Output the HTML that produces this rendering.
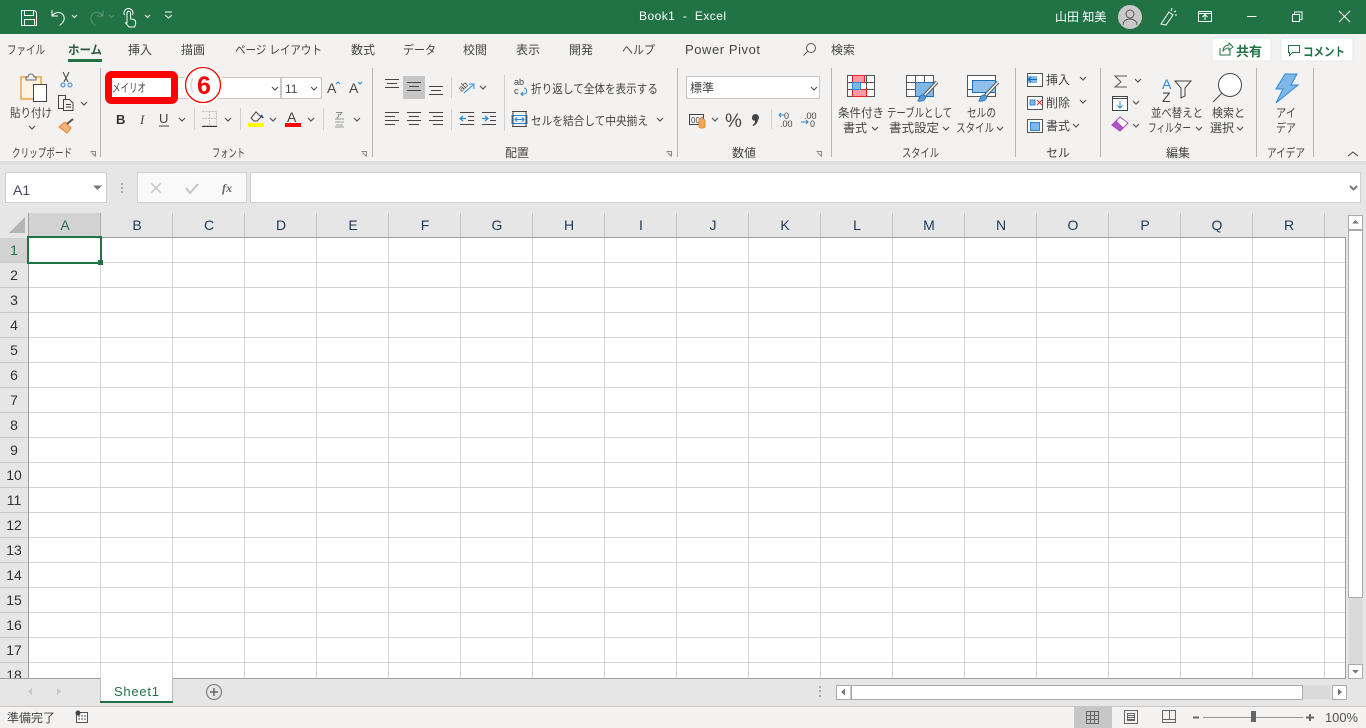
<!DOCTYPE html>
<html lang="ja"><head><meta charset="utf-8"><title>Book1 - Excel</title>
<style>
html,body{margin:0;padding:0;width:1366px;height:728px;overflow:hidden;background:#e6e6e6}
svg{display:block}
text{font-family:"Liberation Sans","Noto Sans CJK JP",sans-serif;font-size:12px;fill:#444;white-space:pre}
.t{font-size:12px;fill:#444}
.h{font-size:14px;fill:#1d3a5c;text-anchor:middle}
.r{font-size:14px;fill:#333;text-anchor:middle}
.c{text-anchor:middle}
.ch{fill:none;stroke:#555;stroke-width:1.2}
.g{stroke:#d4d4d4;stroke-width:1}
.sep{stroke:#b5b5b5;stroke-width:1}
</style></head><body>
<svg width="1366" height="728" viewBox="0 0 1366 728" xmlns="http://www.w3.org/2000/svg">
<!-- title bar -->
<rect width="1366" height="34" fill="#217346"/>
<g fill="none" stroke="#fff" stroke-width="1">
<path d="M21.5 10.500h13l2 2v13h-15zM24.500 10.500v5h9v-5M24.500 25.500v-6h10v6"/>
<path d="M52 10v6h6M52.500 15.500c3-4 9-4 11 0s0 7-4 10"/>
<path d="M72 15l2.500 2.500 2.500-2.500M145 15l2.500 2.500 2.500-2.500"/>
<path d="M127 23v-10a1.800 1.800 0 0 1 3.600 0v6c3 0 5 1 5 3v2l-1 3h-5.600l-3.500-4zM124.500 15a4.500 4.500 0 1 1 8 0"/>
<path d="M165 12h7M165 15l3.500 3 3.500-3"/>
</g>
<g fill="none" stroke="#5a9476" stroke-width="1"><path d="M103 10v6h-6M102.500 15.500c-3-4-9-4-11 0s0 7 4 10"/><path d="M109 15l2.500 2.500 2.500-2.500"/></g>
<text x="639" y="20" style="fill:#fff;font-size:12px" textLength="87" lengthAdjust="spacing">Book1  -  Excel</text>
<text x="1055" y="21" style="fill:#fff;font-size:12px">山田 知美</text>
<circle cx="1130" cy="17" r="12" fill="#c9c9c9"/>
<circle cx="1130" cy="14" r="4" fill="none" stroke="#555"/><path d="M1123 25c0-8 14-8 14 0" fill="none" stroke="#555"/>
<g fill="none" stroke="#fff" stroke-width="1">
<path d="M1161 24l8-12 4 3-7 10zM1161 24l5 1M1171 11l1-3M1174 12l2-1M1175 15l2 0"/>
<path d="M1198.500 11.500h13v10h-13zM1198.500 13.500h13M1205 20v-5M1202.500 17l2.500-2.500 2.500 2.500"/>
<path d="M1247 16.500h9.500M1292.500 14.500h7v7h-7zM1294.500 14.500v-2.500h7.500v7.500h-2"/>
<path d="M1339 11l11 11M1350 11l-11 11"/>
</g>
<!-- ribbon -->
<rect y="34" width="1366" height="127" fill="#f3f2f1"/>
<rect y="161" width="1366" height="4" fill="#dedede"/>
<g class="t">
<text x="7" y="54" textLength="38" lengthAdjust="spacingAndGlyphs">ファイル</text>
<text x="68" y="54" style="font-weight:bold;fill:#2b5a41" textLength="34" lengthAdjust="spacingAndGlyphs">ホーム</text>
<text x="128" y="54">挿入</text>
<text x="181" y="54">描画</text>
<text x="235" y="54" textLength="87" lengthAdjust="spacingAndGlyphs">ページ レイアウト</text>
<text x="351" y="54">数式</text>
<text x="403" y="54" textLength="33" lengthAdjust="spacingAndGlyphs">データ</text>
<text x="463" y="54">校閲</text>
<text x="516" y="54">表示</text>
<text x="569" y="54">開発</text>
<text x="622" y="54" textLength="33" lengthAdjust="spacingAndGlyphs">ヘルプ</text>
<text x="685" y="54" style="font-size:13px" textLength="75" lengthAdjust="spacing">Power Pivot</text>
<text x="831" y="54">検索</text>
</g>
<rect x="68" y="59" width="34" height="3" fill="#217346"/>
<circle cx="811" cy="48" r="4.500" fill="none" stroke="#555"/><path d="M807.500 51.500l-4 4" stroke="#555" fill="none"/>
<!-- share/comment -->
<rect x="1212" y="38" width="59" height="23" fill="#fff" stroke="#e8e8e8"/>
<path d="M1220 48v7h10v-5M1223 51c0-4 3-6 6-6v-2l4 4-4 3v-2c-3 0-4 1-6 3z" fill="none" stroke="#217346"/>
<text x="1236" y="56" style="font-size:13px;font-weight:bold;fill:#217346">共有</text>
<rect x="1281" y="38" width="72" height="23" fill="#fff" stroke="#e8e8e8"/>
<path d="M1288.500 45.500h11v7h-7l-3 3v-3h-1z" fill="none" stroke="#217346"/>
<text x="1303" y="56" style="font-size:12px;font-weight:bold;fill:#217346" textLength="42" lengthAdjust="spacingAndGlyphs">コメント</text>
<!-- group separators -->
<g class="sep">
<path d="M100.500 68v89M372.500 68v89M677.500 68v89M831.500 68v89M1015.500 68v89M1100.500 68v89M1256.500 68v89M1313.500 68v89"/>
<path d="M194.500 108v22M240.500 108v22M323.500 108v22M451.500 77v21M451.500 109v21M504.500 75v56M771.500 109v20" stroke="#d0d0d0"/>
</g>
<!-- clipboard -->
<path d="M21 77h20v22H21z" fill="#fdf3e3" stroke="#f0a040" stroke-width="1.500"/>
<path d="M26 80v-3h2a3 3 0 0 1 6 0h2v3z" fill="#f3f2f1" stroke="#666"/>
<rect x="33.500" y="84.500" width="13" height="17" fill="#fff" stroke="#444"/>
<text x="10" y="117" style="font-size:12px" textLength="42" lengthAdjust="spacingAndGlyphs">貼り付け</text>
<path class="ch" d="M29 126l3 3 3-3"/>
<path d="M63 72l5 10M69 72l-5 10" stroke="#444" fill="none"/><circle cx="63" cy="85" r="2" fill="none" stroke="#2b88d8"/><circle cx="70" cy="85" r="2" fill="none" stroke="#2b88d8"/>
<path d="M58.500 95.500h7v13h-7z" fill="none" stroke="#444"/><path d="M63.500 99.500h6l3.500 3.500v7.500h-9.500zM66 104.500h5M66 107h5" fill="#f3f2f1" stroke="#444"/>
<path class="ch" d="M81 102l3 3 3-3"/>
<path d="M59 127l6-5 6 6-4 5z" fill="#f3b37a" stroke="#e8872e"/><path d="M67 124l6-5" stroke="#555" stroke-width="2" fill="none"/>
<text x="12" y="157" style="font-size:12px" textLength="60" lengthAdjust="spacingAndGlyphs">クリップボード</text>
<path d="M90.500 151.500h5v5M91.500 152.500l4 4" fill="none" stroke="#888"/>
<!-- font group -->
<rect x="105.500" y="77.500" width="216" height="21" fill="#fff" stroke="#c6c6c6"/>
<path d="M281 77v22" stroke="#c6c6c6" stroke-width="2"/>
<text x="285" y="93" style="font-size:12px">11</text>
<path class="ch" d="M272 87l3 3 3-3M311 87l3 3 3-3"/>
<rect x="108.500" y="74.500" width="66" height="26" rx="3" fill="#fff" stroke="#f00" stroke-width="7"/>
<text x="112" y="92" style="font-size:12px;fill:#445" textLength="34" lengthAdjust="spacingAndGlyphs">メイリオ</text>
<circle cx="203" cy="85" r="20" fill="#fff"/>
<circle cx="203" cy="85" r="17.500" fill="#fff" stroke="#f00" stroke-width="1.300"/>
<path d="M193 78a13 13 0 0 0 0 14" fill="none" stroke="#ddd" stroke-width="2"/>
<text x="204" y="94" class="c" style="font-size:25px;font-weight:bold;fill:#f00">6</text>
<text x="327" y="93" style="font-size:14px">A</text><path d="M336 84l2-2 2 2" fill="none" stroke="#2b88d8"/>
<text x="349" y="93" style="font-size:14px">A</text><path d="M358 82l2 2 2-2" fill="none" stroke="#2b88d8"/>
<text x="116" y="124" style="font-size:13px;font-weight:bold;fill:#333">B</text>
<text x="140" y="124" style="font-size:13px;font-style:italic;font-family:'Liberation Serif',serif">I</text>
<text x="159" y="123" style="font-size:13px">U</text><path d="M159 126h10" stroke="#444"/>
<path class="ch" d="M179 118l3 3 3-3M225 118l3 3 3-3M270 118l3 3 3-3M308 118l3 3 3-3M354 118l3 3 3-3"/>
<path d="M202.500 111.500h14v14h-14M209.500 111v14M202 118.500h15" stroke="#bbb" stroke-dasharray="2 1" fill="none"/><path d="M202 126.500h15" stroke="#333"/>
<path d="M251 118l5-6 5 5-4 4h-3z" fill="none" stroke="#444"/><path d="M261 115l2 3" stroke="#2b5797" stroke-width="2"/>
<rect x="248" y="123" width="16" height="4" fill="#ff0"/>
<text x="287" y="122" style="font-size:14px;fill:#444">A</text>
<rect x="285" y="123" width="16" height="4" fill="#f00"/>
<text x="335" y="118" style="font-size:8px;fill:#555">ア</text><path d="M335 119h9M335 122h9M336 125h7M335 127h9" stroke="#999"/>
<text x="212" y="157" style="font-size:12px" textLength="33" lengthAdjust="spacingAndGlyphs">フォント</text>
<path d="M361.500 151.500h5v5M362.500 152.500l4 4" fill="none" stroke="#888"/>
<!-- alignment -->
<rect x="403" y="76" width="22" height="23" fill="#c6c6c6"/>
<g stroke="#444"><path d="M385 79.500h14M387 83.500h10M385 87.500h14M407 82.500h14M409 86.500h10M407 90.500h14M429 86.500h14M431 90.500h10M429 94.500h14"/>
<path d="M385 112.500h14M385 116.500h10M385 120.500h14M385 124.500h10M407 112.500h14M409 116.500h10M407 120.500h14M409 124.500h10M429 112.500h14M433 116.500h10M429 120.500h14M433 124.500h10"/>
<path d="M460 112.500h14M468 116.500h6M468 120.500h6M460 124.500h14M482 112.500h14M482 116.500h0M490 116.500h6M490 120.500h6M482 124.500h14"/></g>
<path d="M460 118.500h6M463 116l-3 2.500 3 2.500M482 118.500h6M485 116l3 2.500-3 2.500" fill="none" stroke="#2b88d8" stroke-width="1.200"/>
<text x="459" y="90" style="font-size:9px" transform="rotate(-45 463 88)">ab</text><path d="M464 93l9-8M469 84h5v5" fill="none" stroke="#2b88d8"/>
<path class="ch" d="M480 86l3 3 3-3"/>
<text x="514" y="85" style="font-size:9px">ab</text><text x="514" y="94" style="font-size:9px">c</text>
<path d="M521 94h3c3.500 0 3.500-6 0-6M523 92l-2 2 2 2" fill="none" stroke="#2b88d8"/>
<text x="531" y="93" style="font-size:12px" textLength="127" lengthAdjust="spacingAndGlyphs">折り返して全体を表示する</text>
<rect x="512" y="115.500" width="15" height="8" fill="#e4f0fa" stroke="#2b88d8"/><path d="M512 111.500h15M512 126.500h15M513 111v16M526 111v16" stroke="#444" fill="none"/><path d="M515 119.500h9M517 117.500l-2 2 2 2M522 117.500l2 2-2 2" stroke="#2b88d8" fill="none"/>
<text x="531" y="125" style="font-size:12px" textLength="117" lengthAdjust="spacingAndGlyphs">セルを結合して中央揃え</text>
<path class="ch" d="M657 118l3 3 3-3"/>
<text x="505" y="157" style="font-size:12px">配置</text>
<path d="M666.500 151.500h5v5M667.500 152.500l4 4" fill="none" stroke="#888"/>
<!-- number -->
<rect x="686.500" y="76.500" width="133" height="22" fill="#fff" stroke="#c6c6c6"/>
<text x="690" y="92" style="font-size:12px">標準</text>
<path class="ch" d="M811 87l3 3 3-3"/>
<rect x="689.500" y="114.500" width="14" height="10" fill="none" stroke="#444"/><text x="691" y="123" style="font-size:8px">000</text>
<rect x="699" y="119" width="6" height="9" rx="2" fill="#f0a860" stroke="#e8872e"/>
<path class="ch" d="M712 118l3 3 3-3"/>
<text x="725" y="127" style="font-size:19px">%</text>
<path d="M752 118a3.500 3.500 0 1 1 6 2c-.5 3-2 5-5 6l-.5-1c2-1 2.500-2.500 2.500-4.500-1.500 .5-3-.5-3-2.500z" fill="#444"/>
<text x="784" y="119" style="font-size:9px">0</text><text x="780" y="127" style="font-size:9px">.00</text><path d="M779 115h6M781 113l-2 2 2 2" fill="none" stroke="#2b88d8"/>
<text x="804" y="119" style="font-size:9px">.00</text><text x="810" y="127" style="font-size:9px">0</text><path d="M801 122h7M806 120l2 2-2 2" fill="none" stroke="#2b88d8"/>
<text x="732" y="157" style="font-size:12px">数値</text>
<path d="M816.500 151.500h5v5M817.500 152.500l4 4" fill="none" stroke="#888"/>
<!-- styles -->
<g transform="translate(847 75)"><path d="M.5.500h27v21H.5zM.5 7.500h27M.5 14.500h27M5.500 0v22M13.500 0v22M19.500 0v22" fill="#fff" stroke="#555"/>
<rect x="5.500" y=".5" width="12" height="7" fill="#ff9aa2" stroke="#e22"/><rect x="5.500" y="14.500" width="14" height="7" fill="#ff9aa2" stroke="#e22"/><rect x="5.500" y="7.500" width="8" height="7" fill="#7fb8e8" stroke="#2b88d8"/></g>
<text x="838" y="117" style="font-size:12px" textLength="46" lengthAdjust="spacingAndGlyphs">条件付き</text>
<text x="843" y="132" style="font-size:12px">書式</text><path class="ch" d="M872 127l3 3 3-3"/>
<g transform="translate(906 75)"><path d="M.5.500h27v21H.5zM.5 7.500h27M.5 14.500h27M9.500 0v22M18.500 0v22" fill="#fff" stroke="#555"/>
<rect x="9.500" y="7.500" width="18" height="14" fill="#7fb8e8" stroke="#1f6fb5"/>
<path d="M31 7L18 21" stroke="#555" stroke-width="3.500" fill="none"/><path d="M31 7L18 21" stroke="#fff" stroke-width="1.500" fill="none"/>
<path d="M12 26c1-1 1-5 4-6 2-.5 4 1 3.500 3-1 3-5 3.500-7.500 3z" fill="#5b9bd5" stroke="#2b78b8"/></g>
<g transform="translate(967 75)"><path d="M.5.500h28v21H.5zM.5 14.500h5" fill="#fff" stroke="#555"/>
<rect x="5.500" y="5.500" width="23" height="12" fill="#8fc0ee" stroke="#1f6fb5"/>
<path d="M31 7L18 21" stroke="#555" stroke-width="3.500" fill="none"/><path d="M31 7L18 21" stroke="#fff" stroke-width="1.500" fill="none"/>
<path d="M12 26c1-1 1-5 4-6 2-.5 4 1 3.500 3-1 3-5 3.500-7.500 3z" fill="#5b9bd5" stroke="#2b78b8"/></g>
<text x="887" y="117" style="font-size:12px" textLength="65" lengthAdjust="spacingAndGlyphs">テーブルとして</text>
<text x="889" y="132" style="font-size:12px" textLength="50" lengthAdjust="spacingAndGlyphs">書式設定</text><path class="ch" d="M943 127l3 3 3-3"/>
<text x="967" y="117" style="font-size:12px" textLength="29" lengthAdjust="spacingAndGlyphs">セルの</text>
<text x="956" y="132" style="font-size:12px" textLength="38" lengthAdjust="spacingAndGlyphs">スタイル</text><path class="ch" d="M997 127l3 3 3-3"/>
<text x="902" y="157" style="font-size:12px" textLength="37" lengthAdjust="spacingAndGlyphs">スタイル</text>
<!-- cells -->
<path d="M1027.500 73.500h15v13h-15z" fill="#fff" stroke="#555"/><rect x="1028" y="76" width="9" height="7" fill="#7fb8e8"/><path d="M1028 79.500h9M1031 77l-3 2.500 3 2.500" fill="none" stroke="#0f6cbd"/>
<text x="1046" y="84" style="font-size:12px">挿入</text><path class="ch" d="M1080 77l3 3 3-3"/>
<rect x="1027.500" y="96.500" width="15" height="13" fill="#fff" stroke="#555"/><rect x="1030" y="100" width="5" height="5" fill="#7fb8e8" stroke="#2b88d8"/><path d="M1037 100l5 5M1042 100l-5 5" stroke="#e22"/>
<text x="1046" y="107" style="font-size:12px">削除</text><path class="ch" d="M1080 100l3 3 3-3"/>
<rect x="1027.500" y="119.500" width="15" height="13" fill="#fff" stroke="#555"/><rect x="1030.500" y="122.500" width="9" height="8" fill="#7fb8e8" stroke="#2b88d8"/>
<text x="1046" y="130" style="font-size:12px">書式</text><path class="ch" d="M1073 124l3 3 3-3"/>
<text x="1046" y="157" style="font-size:12px">セル</text>
<!-- editing -->
<path d="M1127 76h-12l6 6-6 5h12" fill="none" stroke="#555"/><path class="ch" d="M1135 79l3 3 3-3M1133 101l3 3 3-3M1133 124l3 3 3-3"/>
<rect x="1112.500" y="96.500" width="15" height="14" fill="#fff" stroke="#444"/><path d="M1112 98.500h16" stroke="#444"/><path d="M1120 101v7M1117.500 105.500l2.500 2.500 2.500-2.500" fill="none" stroke="#2b88d8"/>
<path d="M1112 125l8-8 8 6-8 8z" fill="#fff" stroke="#a347ba"/><path d="M1112 125l4-4 7 7-3 3z" fill="#b455c8" stroke="#a347ba"/>
<text x="1162" y="89" style="font-size:14px;fill:#2b88d8">A</text><text x="1162" y="102" style="font-size:14px;fill:#444">Z</text>
<path d="M1175 81h16l-6 7v8l-4 2v-10z" fill="none" stroke="#444"/>
<text x="1151" y="117" style="font-size:12px" textLength="52" lengthAdjust="spacingAndGlyphs">並べ替えと</text>
<text x="1148" y="132" style="font-size:12px" textLength="43" lengthAdjust="spacingAndGlyphs">フィルター</text><path class="ch" d="M1196 127l3 3 3-3"/>
<circle cx="1230" cy="85" r="11.500" fill="#fff" stroke="#444"/><path d="M1222 93l-9 9" stroke="#444" fill="none"/>
<text x="1212" y="117" style="font-size:12px" textLength="33" lengthAdjust="spacingAndGlyphs">検索と</text>
<text x="1210" y="132" style="font-size:12px" textLength="24" lengthAdjust="spacingAndGlyphs">選択</text><path class="ch" d="M1237 127l3 3 3-3"/>
<text x="1166" y="157" style="font-size:12px">編集</text>
<!-- ideas -->
<path d="M1285 74h12l-6 11h7l-22 18 7-14h-7z" fill="#7fb8e8" stroke="#2b88d8"/>
<text x="1276" y="117" style="font-size:12px" textLength="20" lengthAdjust="spacingAndGlyphs">アイ</text>
<text x="1276" y="132" style="font-size:12px" textLength="20" lengthAdjust="spacingAndGlyphs">デア</text>
<text x="1267" y="157" style="font-size:12px" textLength="38" lengthAdjust="spacingAndGlyphs">アイデア</text>
<path d="M1348 156l5-4 5 4" fill="none" stroke="#444"/>
<!-- formula bar -->
<rect y="165" width="1366" height="48" fill="#e6e6e6"/>
<rect x="5.500" y="172.500" width="101" height="30" fill="#fff" stroke="#d0d0d0"/>
<text x="13" y="195" style="font-size:14px;fill:#446">A1</text>
<path d="M93 185.500h9l-4.500 4.500z" fill="#777"/>
<rect x="121" y="183" width="2" height="2" fill="#aaa"/><rect x="121" y="187" width="2" height="2" fill="#aaa"/><rect x="121" y="191" width="2" height="2" fill="#aaa"/>
<rect x="137.500" y="172.500" width="109" height="30" fill="#f9f9f9" stroke="#d0d0d0"/>
<path d="M151 183l10 10M161 183l-10 10" stroke="#c4c4c4" stroke-width="1.500" fill="none"/>
<path d="M186 188l4 5 8-9" stroke="#c4c4c4" stroke-width="2" fill="none"/>
<text x="222" y="192" style="font-size:12px;font-style:italic;font-weight:bold;font-family:'Liberation Serif',serif;fill:#666">fx</text>
<rect x="250.500" y="172.500" width="1110" height="30" fill="#fff" stroke="#d0d0d0"/>
<path d="M1350 186l3.500 3.500 3.500-3.500" fill="none" stroke="#777" stroke-width="2"/>
<!-- sheet -->
<rect x="29" y="238" width="1316" height="441" fill="#fff"/>
<g class="g"><path d="M100.500 238v441M172.500 238v441M244.500 238v441M316.500 238v441M388.500 238v441M460.500 238v441M532.500 238v441M604.500 238v441M676.500 238v441M748.500 238v441M820.500 238v441M892.500 238v441M964.500 238v441M1036.500 238v441M1108.500 238v441M1180.500 238v441M1252.500 238v441M1324.500 238v441"/>
<path d="M29 262.500h1316M29 287.500h1316M29 312.500h1316M29 337.500h1316M29 362.500h1316M29 387.500h1316M29 412.500h1316M29 437.500h1316M29 462.500h1316M29 487.500h1316M29 512.500h1316M29 537.500h1316M29 562.500h1316M29 587.500h1316M29 612.500h1316M29 637.500h1316M29 662.500h1316"/></g>
<rect x="29" y="213" width="72" height="24" fill="#d2d2d2"/>
<rect y="238" width="28" height="25" fill="#d2d2d2"/>
<path d="M25 217v16H9z" fill="#b5b5b5"/>
<path d="M172.500 213v24M244.500 213v24M316.500 213v24M388.500 213v24M460.500 213v24M532.500 213v24M604.500 213v24M676.500 213v24M748.500 213v24M820.500 213v24M892.500 213v24M964.500 213v24M1036.500 213v24M1108.500 213v24M1180.500 213v24M1252.500 213v24M1324.500 213v24" stroke="#c4c4c4"/>
<path d="M100.500 213v24" stroke="#ababab"/>
<path d="M0 262.500h28M0 287.500h28M0 312.500h28M0 337.500h28M0 362.500h28M0 387.500h28M0 412.500h28M0 437.500h28M0 462.500h28M0 487.500h28M0 512.500h28M0 537.500h28M0 562.500h28M0 587.500h28M0 612.500h28M0 637.500h28M0 662.500h28" stroke="#c8c8c8"/>
<path d="M28.500 213v466M28 237.500h1317M1345.500 237v442" stroke="#9f9f9f" fill="none"/>
<text class="h" x="65" y="230" style="fill:#217346">A</text><text class="h" x="137" y="230">B</text><text class="h" x="209" y="230">C</text><text class="h" x="281" y="230">D</text><text class="h" x="353" y="230">E</text><text class="h" x="425" y="230">F</text><text class="h" x="497" y="230">G</text><text class="h" x="569" y="230">H</text><text class="h" x="641" y="230">I</text><text class="h" x="713" y="230">J</text><text class="h" x="785" y="230">K</text><text class="h" x="857" y="230">L</text><text class="h" x="929" y="230">M</text><text class="h" x="1001" y="230">N</text><text class="h" x="1073" y="230">O</text><text class="h" x="1145" y="230">P</text><text class="h" x="1217" y="230">Q</text><text class="h" x="1289" y="230">R</text>
<text class="r" x="14" y="255" style="fill:#217346">1</text><text class="r" x="14" y="280">2</text><text class="r" x="14" y="305">3</text><text class="r" x="14" y="330">4</text><text class="r" x="14" y="355">5</text><text class="r" x="14" y="380">6</text><text class="r" x="14" y="405">7</text><text class="r" x="14" y="430">8</text><text class="r" x="14" y="455">9</text><text class="r" x="14" y="480">10</text><text class="r" x="14" y="505">11</text><text class="r" x="14" y="530">12</text><text class="r" x="14" y="555">13</text><text class="r" x="14" y="580">14</text><text class="r" x="14" y="605">15</text><text class="r" x="14" y="630">16</text><text class="r" x="14" y="655">17</text><text class="r" x="14" y="680">18</text>
<rect x="28" y="237" width="73" height="26" fill="none" stroke="#217346" stroke-width="2"/>
<rect x="98" y="260" width="5" height="5" fill="#217346"/>
<!-- v scrollbar -->
<rect x="1346" y="213" width="20" height="466" fill="#e6e6e6"/>
<rect x="1348.500" y="215.500" width="14" height="463" fill="#dadada"/>
<rect x="1348.500" y="215.500" width="14" height="14" fill="#fff" stroke="#ababab"/>
<path d="M1352 223.500h7l-3.500-3.500z" fill="#777"/>
<rect x="1348.500" y="230.500" width="14" height="367" fill="#fff" stroke="#ababab"/>
<rect x="1348.500" y="664.500" width="14" height="14" fill="#fff" stroke="#ababab"/>
<path d="M1352 670h7l-3.500 3.500z" fill="#777"/>
<!-- tabs -->
<rect y="679" width="1366" height="27" fill="#e6e6e6"/>
<path d="M0 678.500h1346" stroke="#9f9f9f"/>
<rect x="100" y="678" width="73" height="25" fill="#fff"/>
<path d="M100.500 678v24M172.500 678v24" stroke="#bdbdbd"/>
<rect x="100" y="701" width="73" height="2" fill="#217346"/>
<text x="114" y="696" style="font-size:13px;fill:#217346" textLength="45" lengthAdjust="spacing">Sheet1</text>
<path d="M32 688v7l-4-3.500zM57 688v7l4-3.500z" fill="#c8c8c8"/>
<circle cx="214" cy="692" r="7.500" fill="none" stroke="#888" stroke-width="1.300"/><path d="M210 692h8M214 688v8" stroke="#666" stroke-width="1.500"/>
<rect x="819" y="686" width="2" height="2" fill="#aaa"/><rect x="819" y="690" width="2" height="2" fill="#aaa"/><rect x="819" y="695" width="2" height="2" fill="#aaa"/>
<rect x="836.500" y="685.500" width="14" height="14" fill="#fff" stroke="#ababab"/><path d="M845 688.500v7l-4-3.500z" fill="#777"/>
<rect x="850.500" y="685.500" width="480" height="14" fill="#dadada"/>
<rect x="851.500" y="685.500" width="451" height="14" fill="#fff" stroke="#ababab"/>
<rect x="1332.500" y="685.500" width="14" height="14" fill="#fff" stroke="#ababab"/><path d="M1338 688.500v7l4-3.500z" fill="#777"/>
<!-- status -->
<rect y="707" width="1366" height="21" fill="#f3f2f1"/>
<path d="M0 706.500h1366" stroke="#c8c8c8"/>
<text x="7" y="722" style="font-size:12px">準備完了</text>
<rect x="76.500" y="712.500" width="11" height="10" fill="#fff" stroke="#555"/><circle cx="78" cy="713" r="2.500" fill="#444"/><path d="M78 716h8M78 719h8" stroke="#555" stroke-dasharray="2 1"/>
<rect x="1074" y="707" width="38" height="21" fill="#c6c6c6"/>
<path d="M1086.500 711.500h12v12h-12zM1090.500 711.500v12M1094.500 711.500v12M1086.500 715.500h12M1086.500 719.500h12" fill="none" stroke="#666"/>
<path d="M1124.500 710.500h13v13h-13zM1127.500 713.500h7v7h-7zM1128 715.500h6M1128 717.500h6M1128 719.500h6" fill="none" stroke="#666"/>
<path d="M1162.500 710.500h13v12h-13zM1162.500 719.500h13M1169.500 710.500v9" fill="none" stroke="#666"/>
<rect x="1193" y="716.500" width="6" height="2" fill="#666"/>
<rect x="1203" y="717" width="100" height="1" fill="#999"/>
<rect x="1251" y="711" width="5" height="11" fill="#666"/>
<path d="M1306 717.500h8M1310 714v7" stroke="#666" stroke-width="2"/>
<text x="1325" y="722" style="font-size:13px;fill:#555" textLength="33" lengthAdjust="spacingAndGlyphs">100%</text>
</svg>
</body></html>
